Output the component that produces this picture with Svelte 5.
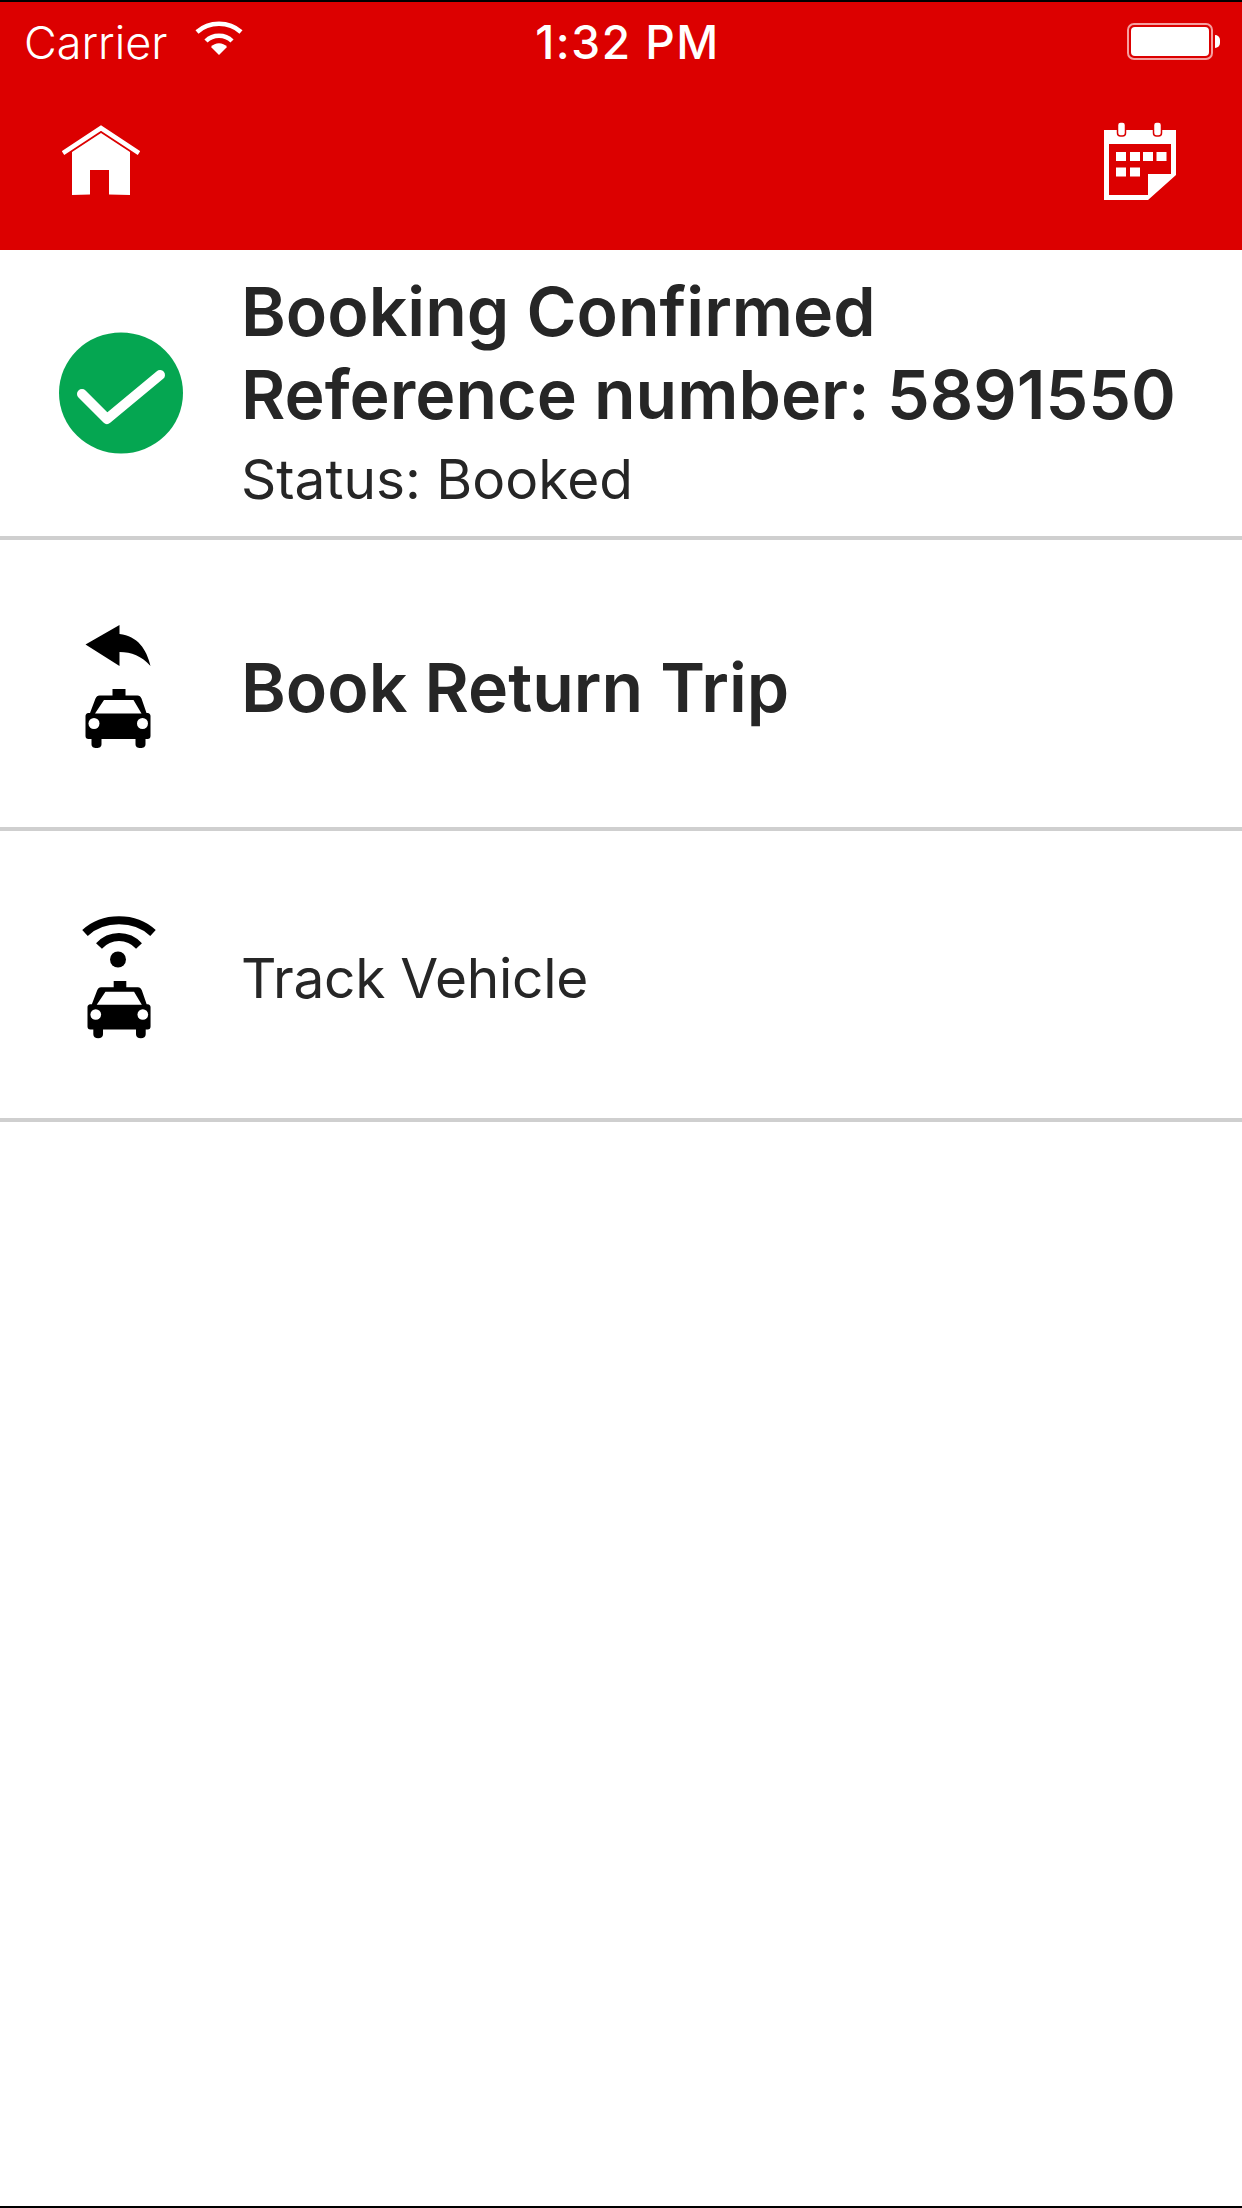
<script>
  const rows = [
    { label: "Book Return Trip", bold: true, icon: "return" },
    { label: "Track Vehicle", bold: false, icon: "track" },
  ];

  const taxiPath = "M27 0H40V6.5H52C54 6.5 55 7.5 56 9.5L61 24H62C64 24 65 25.5 65 27V47C65 49 64 50 62 50H60V55C60 58 58 59 55 59C52 59 50 58 50 55V50H16V55C16 58 14 59 11 59C8 59 6 58 6 55V50H3C1 50 0 49 0 47V27C0 25.5 1 24 3 24H4.5L10 9.5C11 7.5 12 6.5 14 6.5H27ZM18.5 11L9.5 24.5H56L48 11Z";
</script>

{#snippet taxi()}
  <path d={taxiPath} fill-rule="evenodd" />
  <circle cx="8.5" cy="34.5" r="5.5" fill="#fff" />
  <circle cx="57" cy="34.5" r="5.5" fill="#fff" />
{/snippet}

<div class="screen">
  <header class="top">
    <div class="status">
      <div class="status-left">
        <span class="carrier">Carrier</span>
        <svg class="wifi" viewBox="0 0 48 36" width="48" height="36">
          <path d="M2 11C14 0 34 0 46 11" fill="none" stroke="#fff" stroke-width="4.5" />
          <path d="M11 20C18 13 30 13 37 20" fill="none" stroke="#fff" stroke-width="4.5" />
          <path d="M24 34l-8-8c4-5 12-5 16 0z" fill="#fff" />
        </svg>
      </div>
      <span class="time">1:32 PM</span>
      <div class="battery">
        <div class="battery-body"><div class="battery-fill"></div></div>
        <div class="battery-cap"></div>
      </div>
    </div>
    <div class="nav">
      <svg class="home" viewBox="0 0 78 71" width="78" height="71">
        <path d="M1 28L39 3l38 25" fill="none" stroke="#fff" stroke-width="4.500" />
        <path fill-rule="evenodd" d="M39 8L68 27V70L47 69.5V45H28V69.5L10 70V27z" fill="#fff" />
      </svg>
      <svg class="calendar" viewBox="0 0 72 78" width="72" height="78">
        <path fill-rule="evenodd" d="M0 8H72V53L44 78H0zM5 22V73H44V52H67V22z" fill="#fff" />
        <rect x="13.5" y="0" width="8" height="14" rx="3" fill="#fff" stroke="#dc0000" stroke-width="1.5" />
        <rect x="49.5" y="0" width="8" height="14" rx="3" fill="#fff" stroke="#dc0000" stroke-width="1.5" />
        <g fill="#fff">
          <rect x="12" y="30" width="10" height="9" /><rect x="26" y="30" width="10" height="9" />
          <rect x="39" y="30" width="10" height="9" /><rect x="52.500" y="30" width="10" height="9" />
          <rect x="12" y="45.500" width="10" height="9" /><rect x="26" y="45.500" width="10" height="9" />
        </g>
      </svg>
    </div>
  </header>

  <section class="row confirm">
    <div class="icon-col">
      <svg viewBox="0 0 124 122" width="124" height="122">
        <ellipse cx="62" cy="61" rx="62" ry="60.500" fill="#05a651" />
        <path d="M23 62L48 87 101 43" fill="none" stroke="#fff" stroke-width="10" stroke-linecap="round" stroke-linejoin="round" />
      </svg>
    </div>
    <div class="text">
      <div class="strong">Booking Confirmed</div>
      <div class="strong">Reference number: 5891550</div>
      <div class="status-line">Status: Booked</div>
    </div>
  </section>

  {#each rows as row}
    <section class="row action">
      <div class="icon-col action-icon">
        <svg viewBox="0 0 76 126" width="76" height="126">
          {#if row.icon === "return"}
            <g transform="translate(4.500,0)">
              <path d="M0 19.500L34 0V9C52 11 61 24 65 41C56 31 46 27 34 27V41z" />
            </g>
            <g transform="translate(4.500,64)">{@render taxi()}</g>
          {:else}
            <path d="M4 17C22 0 54 0 72 17" fill="none" stroke="#000" stroke-width="8" />
            <path d="M18 30C29 18 47 18 58 30" fill="none" stroke="#000" stroke-width="8" />
            <circle cx="37" cy="43.500" r="8" />
            <g transform="translate(6.500,65) scale(0.97)">{@render taxi()}</g>
          {/if}
        </svg>
      </div>
      <div class="label" class:bold={row.bold}>{row.label}</div>
    </section>
  {/each}
</div>

<style>
  :global(body) {
    margin: 0;
    background: #fff;
  }

  .screen {
    width: 1242px;
    height: 2208px;
    box-sizing: border-box;
    border-top: 2px solid #000;
    border-bottom: 2px solid #000;
    background: #fff;
    font-family: Inter, "Liberation Sans", Arial, sans-serif;
    color: #262626;
    overflow: hidden;
  }

  .top {
    height: 248px;
    background: #dc0000;
    color: #fff;
  }

  .status {
    height: 78px;
    padding: 0 22px 0 24px;
    display: grid;
    grid-template-columns: 1fr auto 1fr;
    align-items: center;
  }

  .status-left {
    display: flex;
    align-items: center;
    gap: 27px;
    font-size: 45px;
    font-weight: 300;
  }

  .carrier {
    padding-top: 2px;
  }

  .wifi {
    margin-top: -4px;
  }

  .time {
    padding: 2px 0 0 11px;
    font-size: 46px;
    font-weight: 500;
    letter-spacing: 1.5px;
  }

  .battery {
    justify-self: end;
    display: flex;
    align-items: center;
    gap: 2px;
  }

  .battery-body {
    width: 86px;
    height: 37px;
    box-sizing: border-box;
    border: 2px solid #f5a0a0;
    border-radius: 7px;
    padding: 2px;
  }

  .battery-fill {
    height: 100%;
    background: #fff;
    border-radius: 4px;
  }

  .battery-cap {
    width: 5px;
    height: 13px;
    background: #fff;
    border-radius: 0 6px 6px 0;
  }

  .nav {
    display: flex;
    justify-content: space-between;
    align-items: flex-start;
    padding: 45px 66px 0 62px;
  }

  .calendar {
    margin-top: -3px;
  }

  .row {
    display: flex;
    align-items: center;
    box-sizing: border-box;
    border-bottom: 4px solid #cfcfcf;
  }

  .confirm {
    height: 290px;
  }

  .action {
    height: 291px;
  }

  .icon-col {
    width: 241px;
    flex: none;
    display: flex;
    justify-content: center;
  }

  .action-icon {
    padding: 8px 3px 0 0;
    box-sizing: border-box;
  }

  .icon-col svg {
    display: block;
  }

  .text {
    margin-top: -2px;
  }

  .strong {
    font-size: 68px;
    font-weight: 600;
    line-height: 83px;
  }

  .status-line {
    margin-top: 7px;
    font-size: 55px;
    line-height: 72px;
  }

  .label {
    padding-top: 7px;
    font-size: 55px;
    letter-spacing: -0.3px;
  }

  .label.bold {
    font-size: 68px;
    font-weight: 600;
    letter-spacing: 0;
  }
</style>
